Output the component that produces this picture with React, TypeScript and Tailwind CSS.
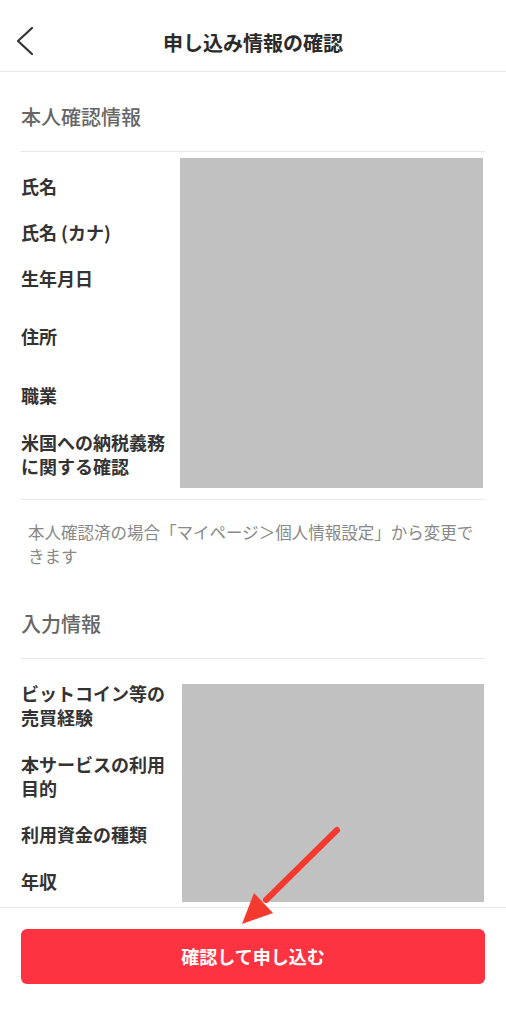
import React from "react";

const font = { fontFamily: '"Noto Sans CJK JP", "Noto Sans", sans-serif' };

function Label({ children, className = "" }: { children: React.ReactNode; className?: string }) {
  return (
    <div className={`text-[18px] leading-[24px] font-semibold text-[#333333] ${className}`}>{children}</div>
  );
}

export default function App() {
  return (
    <div
      className="relative flex h-[1024px] w-[506px] flex-col overflow-hidden bg-white"
      style={font}
    >
      {/* Header */}
      <header className="relative flex h-[72px] shrink-0 items-center justify-center border-b border-[#e8e8e8] pt-[14px]">
        <button className="absolute left-[12px] top-[24px] flex h-[34px] w-[26px] items-center justify-center">
          <svg width="26" height="34" viewBox="0 0 26 34" fill="none">
            <path d="M20 4 L6 17 L20 30" stroke="#333333" strokeWidth="2.2" strokeLinecap="round" strokeLinejoin="round" />
          </svg>
        </button>
        <h1 className="text-[20px] leading-[28px] font-semibold text-[#2b2b2b]">申し込み情報の確認</h1>
      </header>

      {/* Main content */}
      <main className="flex-1 overflow-hidden px-[21px]">
        {/* Section 1 */}
        <h2 className="border-b border-[#e8e8e8] pt-[31px] pb-[20px] text-[20px] leading-[28px] font-medium text-[#666666]">
          本人確認情報
        </h2>
        <div className="flex pt-[6px] pb-[11px]">
          <div className="flex w-[159px] flex-col pt-[16px]">
            <Label>氏名</Label>
            <Label className="mt-[22px]">氏名 (カナ)</Label>
            <Label className="mt-[22px]">生年月日</Label>
            <Label className="mt-[34px]">住所</Label>
            <Label className="mt-[35px]">職業</Label>
            <Label className="mt-[23px]">
              米国への納税義務
              <br />
              に関する確認
            </Label>
          </div>
          <div className="h-[330px] w-[303px] bg-[#c1c1c1]" />
        </div>
        <div className="border-t border-[#e8e8e8] px-[7px] pt-[20px] text-[16.5px] leading-[24px] text-[#888888]">
          本人確認済の場合「マイページ＞個人情報設定」から変更できます
        </div>

        {/* Section 2 */}
        <h2 className="mt-[42px] border-b border-[#e8e8e8] pb-[20px] text-[20px] leading-[28px] font-medium text-[#666666]">
          入力情報
        </h2>
        <div className="flex">
          <div className="flex w-[161px] flex-col pt-[22px]">
            <Label>
              ビットコイン等の
              <br />
              売買経験
            </Label>
            <Label className="mt-[23px]">
              本サービスの利用
              <br />
              目的
            </Label>
            <Label className="mt-[22px]">利用資金の種類</Label>
            <Label className="mt-[23px]">年収</Label>
          </div>
          <div className="mt-[25px] h-[218px] w-[302px] bg-[#c1c1c1]" />
        </div>
      </main>

      {/* Footer */}
      <footer className="h-[117px] shrink-0 border-t border-[#e8e8e8] px-[21px] pt-[21px]">
        <button className="flex h-[55px] w-full items-center justify-center rounded-[6px] bg-[#fd3341] text-[18px] font-semibold text-white">
          確認して申し込む
        </button>
      </footer>

      {/* Annotation arrow overlay */}
      <svg
        className="pointer-events-none absolute left-0 top-0"
        width="506"
        height="1024"
        viewBox="0 0 506 1024"
      >
        <line x1="337" y1="830" x2="266" y2="900" stroke="#f43a2f" strokeWidth="6" strokeLinecap="round" />
        <polygon points="242,924 254,893 273,913" fill="#f43a2f" />
      </svg>
    </div>
  );
}
